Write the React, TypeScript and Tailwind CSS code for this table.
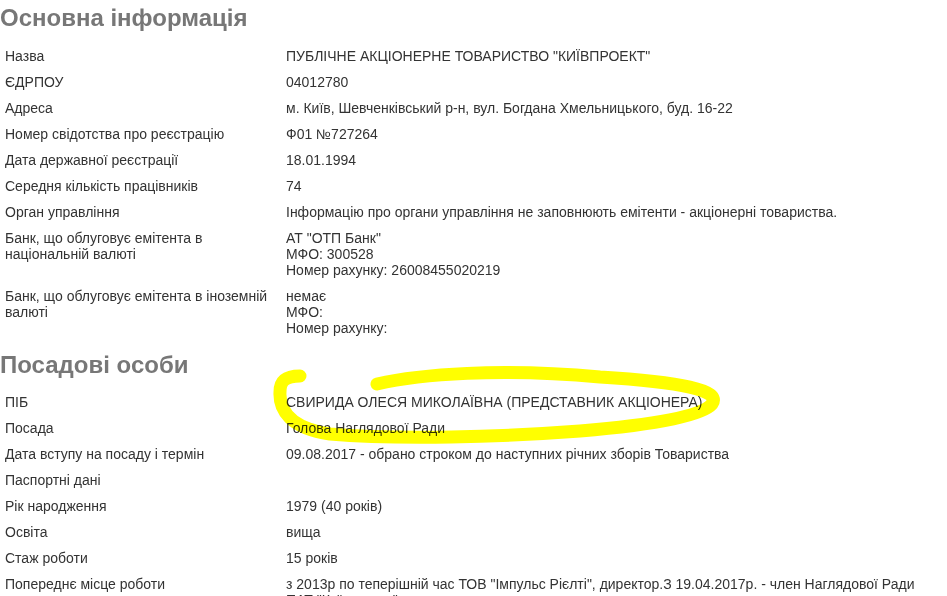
import React from "react";

type Row = { label: React.ReactNode; value: React.ReactNode };

const main: Row[] = [
  { label: "Назва", value: 'ПУБЛІЧНЕ АКЦІОНЕРНЕ ТОВАРИСТВО "КИЇВПРОЕКТ"' },
  { label: "ЄДРПОУ", value: "04012780" },
  { label: "Адреса", value: "м. Київ, Шевченківський р-н, вул. Богдана Хмельницького, буд. 16-22" },
  { label: "Номер свідотства про реєстрацію", value: "Ф01 №727264" },
  { label: "Дата державної реєстрації", value: "18.01.1994" },
  { label: "Середня кількість працівників", value: "74" },
  { label: "Орган управління", value: "Інформацію про органи управління не заповнюють емітенти - акціонерні товариства." },
  {
    label: "Банк, що облуговує емітента в національній валюті",
    value: (
      <>
        АТ "ОТП Банк"
        <br />
        МФО: 300528
        <br />
        Номер рахунку: 26008455020219
      </>
    ),
  },
  {
    label: "Банк, що облуговує емітента в іноземній валюті",
    value: (
      <>
        немає
        <br />
        МФО:
        <br />
        Номер рахунку:
      </>
    ),
  },
];

const officials: Row[] = [
  { label: "ПІБ", value: "СВИРИДА ОЛЕСЯ МИКОЛАЇВНА (ПРЕДСТАВНИК АКЦІОНЕРА)" },
  { label: "Посада", value: "Голова Наглядової Ради" },
  { label: "Дата вступу на посаду і термін", value: "09.08.2017 - обрано строком до наступних річних зборів Товариства" },
  { label: "Паспортні дані", value: "" },
  { label: "Рік народження", value: "1979 (40 років)" },
  { label: "Освіта", value: "вища" },
  { label: "Стаж роботи", value: "15 років" },
  {
    label: "Попереднє місце роботи",
    value:
      'з 2013р по теперішній час ТОВ "Імпульс Рієлті", директор.З 19.04.2017р. - член Наглядової Ради ПАТ "Київпроект"',
  },
];

function Table({ rows }: { rows: Row[] }) {
  return (
    <div className="grid grid-cols-[281px_1fr]">
      {rows.map((r, i) => (
        <React.Fragment key={i}>
          <div className="px-[5px] py-[5px] leading-4">{r.label}</div>
          <div className="px-[5px] py-[5px] leading-4">{r.value || "\u00a0"}</div>
        </React.Fragment>
      ))}
    </div>
  );
}

export default function App() {
  return (
    <div
      className="relative w-[947px] h-[596px] overflow-hidden bg-white text-[14px] text-[#333333]"
      style={{ fontFamily: '"Liberation Sans", Arial, sans-serif' }}
    >
      <h2 className="mt-[5px] mb-[12px] text-[24px] leading-[26px] font-bold text-[#777777]">
        Основна інформація
      </h2>
      <Table rows={main} />
      <h2 className="mt-[11px] mb-[11px] text-[24px] leading-[26px] font-bold text-[#777777]">
        Посадові особи
      </h2>
      <Table rows={officials} />
      <svg
        className="absolute left-0 top-0 pointer-events-none mix-blend-multiply"
        width="947"
        height="596"
        viewBox="0 0 947 596"
      >
        <path
          d="M 377 384 C 420 374, 500 368, 600 377 C 680 382, 722 390, 712 404 C 700 418, 640 426, 580 431 C 500 437, 400 440, 330 434 C 290 428, 279 410, 280 392 C 280 382, 284 376, 300 376"
          fill="none"
          stroke="#ffff00"
          strokeWidth="13"
          strokeLinecap="round"
          strokeLinejoin="round"
        />
      </svg>
    </div>
  );
}
